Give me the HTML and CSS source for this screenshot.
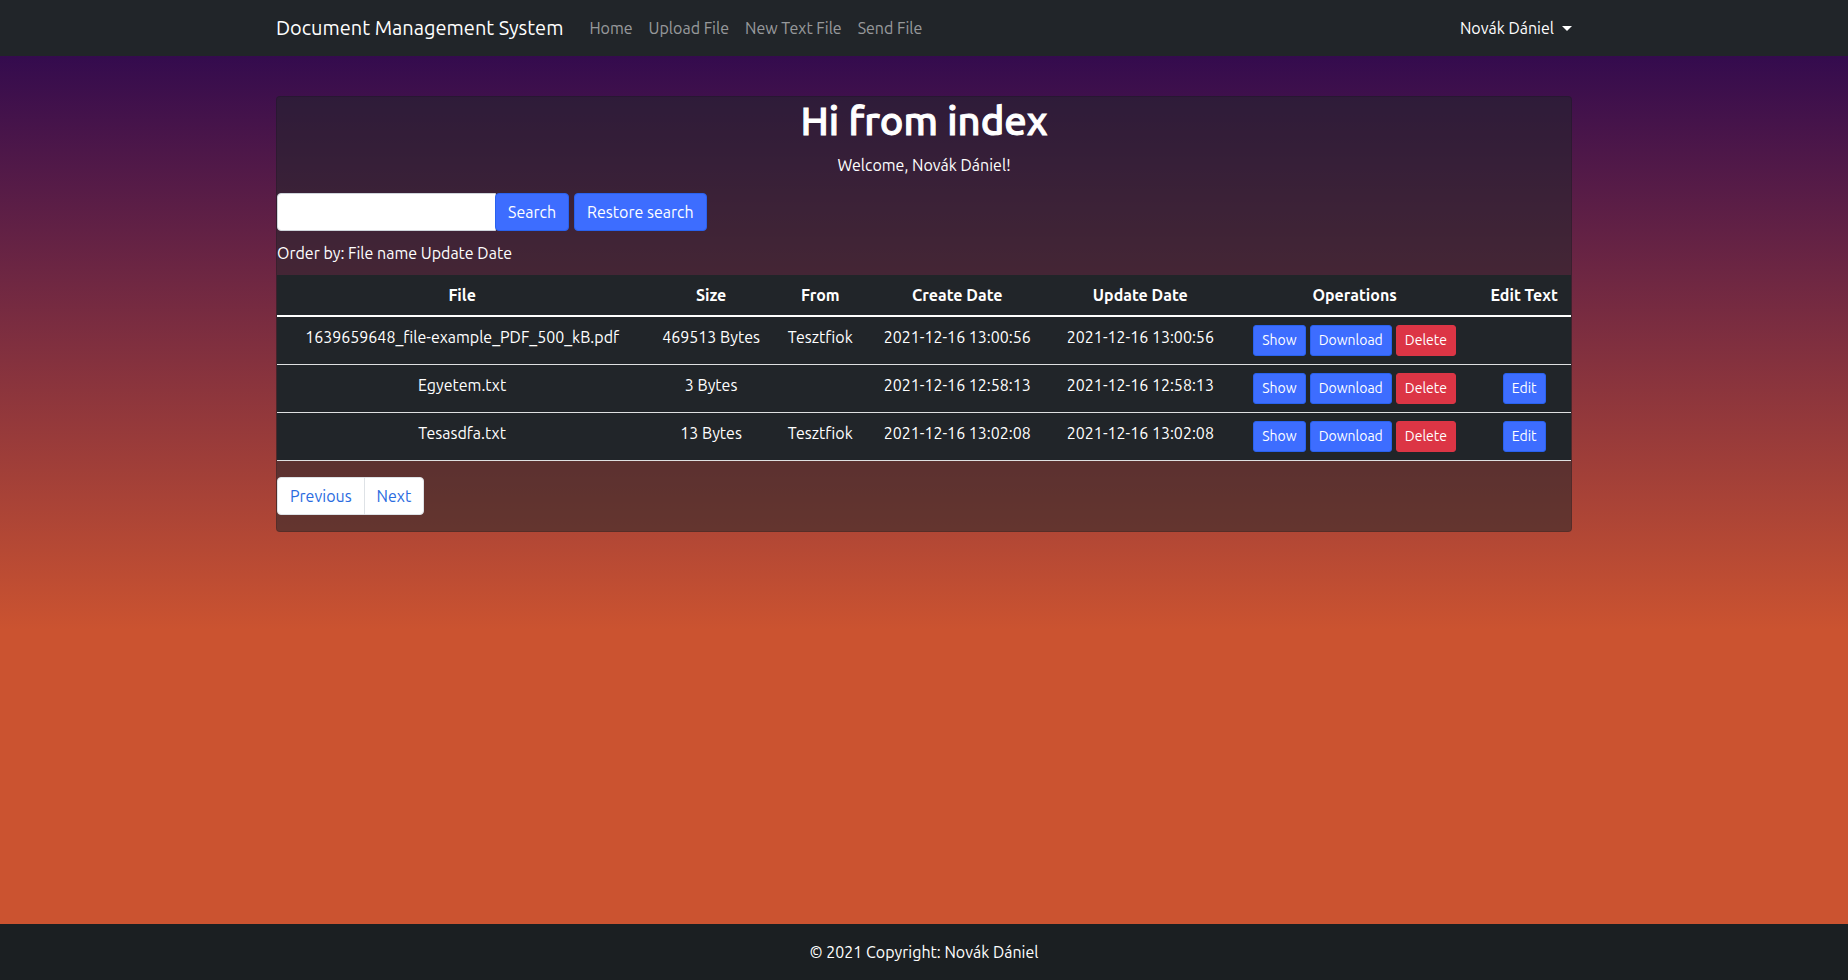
FILE: index.html
```html
<!DOCTYPE html>
<html lang="en">
<head>
<meta charset="utf-8">
<meta name="viewport" content="width=device-width, initial-scale=1">
<title>Document Management System</title>
<link rel="stylesheet" href="styles.css">
</head>
<body>
<nav class="navbar">
  <div class="container navbar-inner">
    <a class="brand" href="#">Document Management System</a>
    <ul class="nav-list">
      <li><a class="nav-link" href="#">Home</a></li>
      <li><a class="nav-link" href="#">Upload File</a></li>
      <li><a class="nav-link" href="#">New Text File</a></li>
      <li><a class="nav-link" href="#">Send File</a></li>
    </ul>
    <button class="user-menu" type="button" aria-haspopup="true">Novák Dániel<span class="caret"></span></button>
  </div>
</nav>

<main class="container main">
  <div class="card">
    <header class="intro">
      <h1 class="title">Hi from index</h1>
      <p class="welcome">Welcome, Novák Dániel!</p>
    </header>
    <form class="search">
      <input class="search-input" type="text" aria-label="Search files">
      <button class="btn btn-primary" type="button">Search</button>
      <button class="btn btn-primary btn-restore" type="button">Restore search</button>
    </form>
    <p class="order">Order by: <a class="order-link" href="#">File name</a> <a class="order-link" href="#">Update Date</a></p>
    <table class="files">
      <thead>
        <tr><th>File</th><th>Size</th><th>From</th><th>Create Date</th><th>Update Date</th><th>Operations</th><th>Edit Text</th></tr>
      </thead>
      <tbody>
        <tr>
          <td>1639659648_file-example_PDF_500_kB.pdf</td><td>469513 Bytes</td><td>Tesztfiok</td><td>2021-12-16 13:00:56</td><td>2021-12-16 13:00:56</td>
          <td><div class="actions"><button class="btn btn-sm btn-primary" type="button">Show</button><button class="btn btn-sm btn-primary" type="button">Download</button><button class="btn btn-sm btn-danger" type="button">Delete</button></div></td>
          <td></td>
        </tr>
        <tr>
          <td>Egyetem.txt</td><td>3 Bytes</td><td></td><td>2021-12-16 12:58:13</td><td>2021-12-16 12:58:13</td>
          <td><div class="actions"><button class="btn btn-sm btn-primary" type="button">Show</button><button class="btn btn-sm btn-primary" type="button">Download</button><button class="btn btn-sm btn-danger" type="button">Delete</button></div></td>
          <td><div class="actions"><button class="btn btn-sm btn-primary" type="button">Edit</button></div></td>
        </tr>
        <tr>
          <td>Tesasdfa.txt</td><td>13 Bytes</td><td>Tesztfiok</td><td>2021-12-16 13:02:08</td><td>2021-12-16 13:02:08</td>
          <td><div class="actions"><button class="btn btn-sm btn-primary" type="button">Show</button><button class="btn btn-sm btn-primary" type="button">Download</button><button class="btn btn-sm btn-danger" type="button">Delete</button></div></td>
          <td><div class="actions"><button class="btn btn-sm btn-primary" type="button">Edit</button></div></td>
        </tr>
      </tbody>
    </table>
    <nav class="pagination" aria-label="Pages">
      <a class="page-link" href="#">Previous</a>
      <a class="page-link" href="#">Next</a>
    </nav>
  </div>
</main>

<footer class="footer">© 2021 Copyright: Novák Dániel</footer>
</body>
</html>
```
FILE: styles.css
```css
* { box-sizing: border-box; }

body {
  margin: 0;
  min-height: 100vh;
  display: flex;
  flex-direction: column;
  font-family: Ubuntu, "Noto Sans", "Open Sans", sans-serif;
  font-size: 16px;
  line-height: 24px;
  color: #fff;
  background: linear-gradient(#340b4e 56px, #cb5330 630px);
}

a { color: inherit; text-decoration: none; }
button, input { font: inherit; }

.container {
  width: 100%;
  max-width: 1320px;
  margin: 0 auto;
  padding: 0 12px;
}

.navbar { background: #212529; padding: 8px 0; }
.navbar-inner { display: flex; align-items: center; min-height: 40px; }
.brand { font-size: 20px; line-height: 30px; margin-right: 18px; }
.nav-list { display: flex; margin: 0; padding: 0; list-style: none; }
.nav-link { display: block; padding: 8px; color: rgba(255, 255, 255, .55); }
.user-menu {
  display: flex;
  align-items: center;
  gap: 8px;
  margin-left: auto;
  padding: 8px 0;
  border: 0;
  background: none;
  color: #fff;
}
.caret { border: 5px solid transparent; border-top-color: #fff; border-bottom: 0; }

.main { flex: 1; padding-top: 40px; padding-bottom: 40px; }
.card {
  padding-bottom: 16px;
  border: 1px solid rgba(0, 0, 0, .13);
  border-radius: 4px;
  background: rgba(33, 37, 41, .53);
}
.intro { text-align: center; }
.title {
  margin: 0 0 8px;
  font-size: 40px;
  line-height: 48px;
  font-weight: 500;
  -webkit-text-stroke: 1px #fff;
}
.welcome { margin: 0 0 16px; }

.search { display: flex; }
.search-input {
  width: 219px;
  height: 38px;
  padding: 6px 12px;
  border: 1px solid #ced4da;
  border-radius: 4px 0 0 4px;
  background: #fff;
  color: #212529;
}
.btn {
  padding: 6px 12px;
  border: 1px solid;
  border-radius: 4px;
  color: #fff;
  text-align: center;
}
.btn-primary { background: #3d6dff; border-color: #2962ee; }
.btn-danger { background: #dc3545; border-color: #dc3545; }
.search .btn { margin-left: -1px; }
.search .btn-restore { margin-left: 5px; }
.btn-sm { padding: 4px 8px; font-size: 14px; line-height: 21px; border-radius: 3px; }

.order { margin: 10px 0; }

.files {
  width: 100%;
  border-spacing: 0;
  background: #212529;
  text-align: center;
}
.files th, .files td { padding: 8px; vertical-align: top; border-bottom: 1px solid #dfe0e1; }
.files th { border-bottom: 2px solid #fff; font-weight: 700; }
.actions { display: flex; justify-content: center; gap: 4px; }

.pagination { display: flex; margin-top: 16px; }
.page-link {
  padding: 6px 12px;
  border: 1px solid #dee2e6;
  background: #fff;
  color: #2a6be0;
}
.page-link:first-child { border-radius: 4px 0 0 4px; }
.page-link:last-child { border-radius: 0 4px 4px 0; margin-left: -1px; }

.footer { padding: 16px; background: #1b1f22; text-align: center; }
```
